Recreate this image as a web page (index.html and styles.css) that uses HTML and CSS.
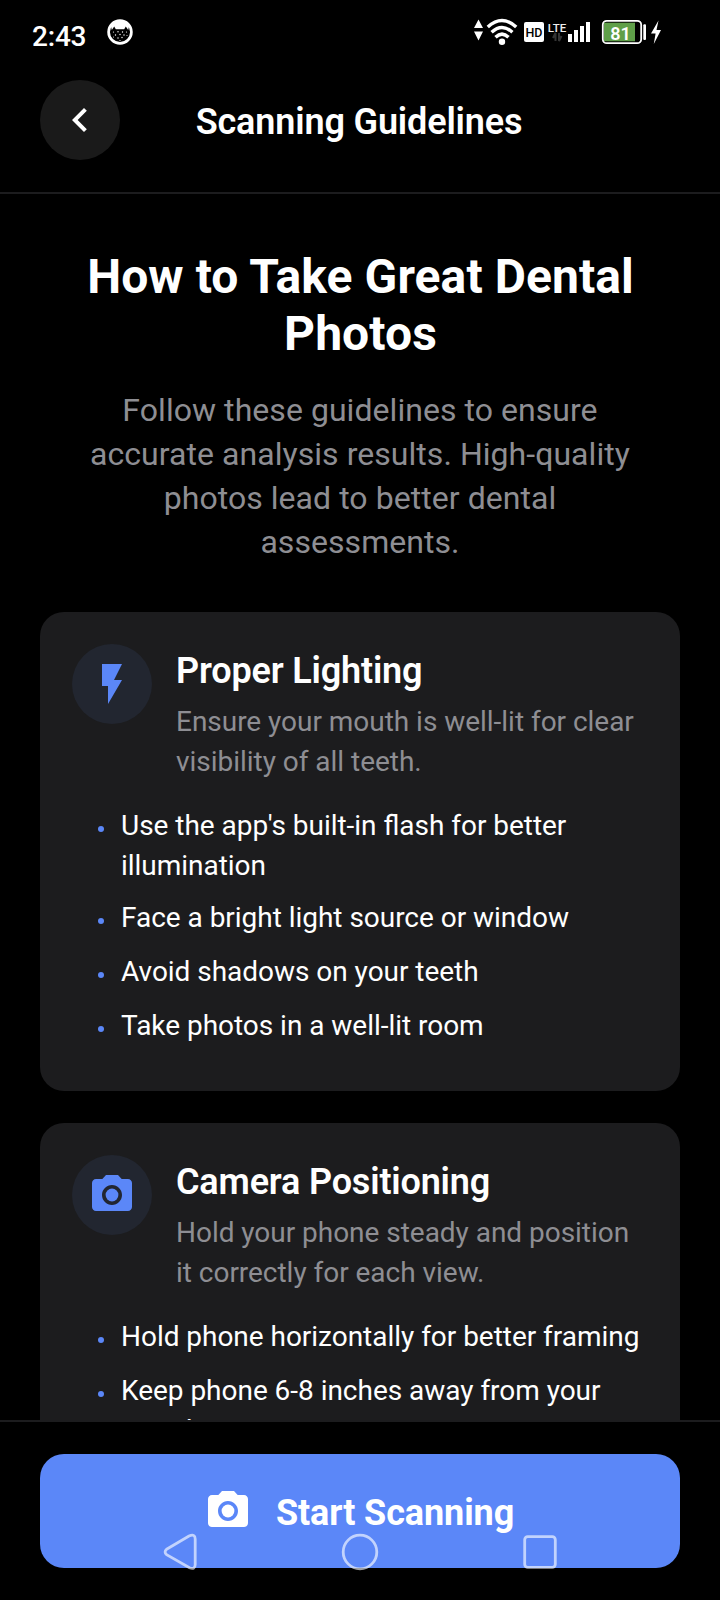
FILE: index.html
```html
<!DOCTYPE html>
<html lang="en">
<head>
<meta charset="utf-8">
<title>Scanning Guidelines</title>
<link rel="stylesheet" href="styles.css">
</head>
<body>
<div class="screen">
  <div class="status">
    <span class="clock">2:43</span>
    <svg class="cat" width="26" height="26" viewBox="0 0 26 26">
      <circle cx="13" cy="13" r="11.4" fill="#000" stroke="#fff" stroke-width="2.7"/>
      <path d="M4 7.5C6 2.5 10 1 13 1S20 2.5 22 7.5L21.2 11L18.8 7.5L17.2 10.2H8.8L7.2 7.5L4.8 11Z" fill="#fff"/>
      <g fill="#fff"><circle cx="6.5" cy="13" r=".6"/><circle cx="11" cy="12.8" r=".7"/><circle cx="15.5" cy="13" r=".7"/><circle cx="19.5" cy="13" r=".6"/><circle cx="8.5" cy="16" r=".7"/><circle cx="13" cy="15.5" r=".7"/><circle cx="17" cy="16" r=".7"/><circle cx="11" cy="19" r=".7"/><circle cx="15" cy="18.5" r=".7"/><circle cx="13" cy="21.5" r=".6"/><circle cx="20" cy="16.5" r=".5"/><circle cx="6.5" cy="18" r=".5"/></g>
    </svg>
    <svg class="indicators" width="190" height="28" viewBox="473 18 190 28">
      <g fill="#fff">
        <path d="M478.5 19.5L483 28H474ZM474 31.5H483L478.5 40.5Z"/>
        <circle cx="502" cy="41.8" r="3.2"/>
        <g fill="none" stroke="#fff" stroke-width="3.4">
          <path d="M487.8 27Q502 14 516.2 27"/><path d="M491.6 32.3Q502 22.6 512.4 32.3"/><path d="M495.5 37.2Q502 31 508.5 37.2"/>
        </g>
        <rect x="524" y="22" width="20" height="20" rx="2"/>
        <path d="M568 34h4v8h-4zM574 30h4v12h-4zM580 26h4v16h-4zM586 22h4v20h-4z"/>
        <rect x="643.3" y="24.3" width="2.7" height="15.7" rx="1"/>
        <path d="M658.5 20.5L651 33.5H655.6L653.8 44L661 30H656.5Z"/>
      </g>
      <path d="M555.5 41V33L553 38M559 33V41L561.5 36" fill="none" stroke="#343434" stroke-width="2"/>
      <rect x="602.8" y="20.8" width="38.4" height="22.4" rx="4" fill="#000" stroke="#fff" stroke-width="1.8"/>
      <path d="M604 22.7H635V41.3H604Z" fill="#5f9f49"/>
      <text x="534" y="36.5" class="hd">HD</text>
      <text x="557" y="32" class="lte">LTE</text>
      <text x="620.5" y="40" class="level">81</text>
    </svg>
  </div>
  <header class="header">
    <div class="back"><svg width="48" height="48" viewBox="0 0 24 24" fill="#fff"><path d="M15.41 7.41L14 6l-6 6 6 6 1.41-1.41L10.83 12z"/></svg></div>
    <h1 class="title">Scanning Guidelines</h1>
    <div class="spacer"></div>
  </header>
  <main class="content">
    <h2 class="hero">How to Take Great Dental Photos</h2>
    <p class="intro">Follow these guidelines to ensure accurate analysis results. High-quality photos lead to better dental assessments.</p>
    <section class="card">
      <div class="card-head">
        <div class="badge"><svg width="48" height="48" viewBox="0 0 24 24" fill="#5b87f8"><path d="M7 2v11h3v9l7-12h-4l4-8z"/></svg></div>
        <div class="card-copy">
          <h3 class="card-title">Proper Lighting</h3>
          <p class="card-desc">Ensure your mouth is well-lit for clear visibility of all teeth.</p>
        </div>
      </div>
      <ul class="tips">
        <li class="tip tip-wrapped">Use the app's built-in flash for better illumination</li>
        <li class="tip">Face a bright light source or window</li>
        <li class="tip">Avoid shadows on your teeth</li>
        <li class="tip">Take photos in a well-lit room</li>
      </ul>
    </section>
    <section class="card">
      <div class="card-head">
        <div class="badge"><svg width="48" height="48" viewBox="0 0 24 24" fill="#5b87f8"><circle cx="12" cy="12" r="3.2"/><path d="M9 2L7.17 4H4c-1.1 0-2 .9-2 2v12c0 1.1.9 2 2 2h16c1.1 0 2-.9 2-2V6c0-1.1-.9-2-2-2h-3.17L15 2H9zm3 15c-2.76 0-5-2.24-5-5s2.24-5 5-5 5 2.24 5 5-2.24 5-5 5z"/></svg></div>
        <div class="card-copy">
          <h3 class="card-title">Camera Positioning</h3>
          <p class="card-desc">Hold your phone steady and position it correctly for each view.</p>
        </div>
      </div>
      <ul class="tips">
        <li class="tip">Hold phone horizontally for better framing</li>
        <li class="tip tip-wrapped">Keep phone 6-8 inches away from your mouth</li>
      </ul>
    </section>
  </main>
  <footer class="footer">
    <div class="start">
      <svg width="48" height="48" viewBox="0 0 24 24" fill="#fff"><circle cx="12" cy="12" r="3.2"/><path d="M9 2L7.17 4H4c-1.1 0-2 .9-2 2v12c0 1.1.9 2 2 2h16c1.1 0 2-.9 2-2V6c0-1.1-.9-2-2-2h-3.17L15 2H9zm3 15c-2.76 0-5-2.24-5-5s2.24-5 5-5 5 2.24 5 5-2.24 5-5 5z"/></svg>
      <span class="start-label">Start Scanning</span>
    </div>
  </footer>
  <svg class="sysnav" width="720" height="48" viewBox="0 1528 720 48" fill="none" stroke="#fff" stroke-opacity=".63" stroke-width="2.8">
    <path d="M166.6 1549.2L189 1536Q195.2 1533.4 195.2 1539V1564.5Q195.2 1570 189.5 1567.8L166.6 1554.6Q163.6 1552 166.6 1549.2Z"/>
    <circle cx="360" cy="1552" r="16.8"/>
    <rect x="524.7" y="1536.7" width="30.6" height="30.6" rx="3"/>
  </svg>
</div>
</body>
</html>
```
FILE: styles.css
```css
* { box-sizing: border-box; margin: 0; padding: 0; }
body { background: #000; color: #fff; font-family: Roboto, sans-serif; }
svg { display: block; flex: none; }
.screen { position: relative; width: 720px; height: 1600px; display: flex; flex-direction: column; overflow: hidden; background: #000; }
.status { height: 80px; flex: none; display: flex; align-items: flex-start; padding: 18px 57px 0 32px; }
.clock { width: 75px; padding-top: 1px; font-size: 28px; line-height: 36px; font-weight: 500; letter-spacing: -.2px; }
.cat { margin-top: 1px; }
.indicators { margin-left: auto; }
.hd { font: 500 12.5px Roboto, sans-serif; fill: #000; text-anchor: middle; }
.lte { font: 500 11.5px Roboto, sans-serif; fill: #eee; text-anchor: middle; }
.level { font: 600 18px Roboto, sans-serif; fill: #fff; text-anchor: middle; }
.header { height: 114px; flex: none; display: flex; justify-content: space-between; padding: 0 40px; border-bottom: 2px solid #1c1c1e; }
.back { width: 80px; height: 80px; border-radius: 50%; background: #1a1a1a; display: flex; align-items: center; justify-content: center; }
.title { font-size: 36px; line-height: 42px; font-weight: 600; letter-spacing: -.15px; padding: 21px 2px 0 0; }
.spacer { width: 80px; }
.content { flex: 1; min-height: 0; overflow: hidden; padding: 54px 40px 0; }
.hero { font-size: 48px; line-height: 57px; font-weight: 700; letter-spacing: .08px; text-align: center; margin-bottom: 26px; padding-left: 1px; }
.intro { font-size: 32px; line-height: 44px; letter-spacing: .05px; color: #8e8e93; text-align: center; padding: 0 32px; margin-bottom: 48px; }
.card { background: #1c1c1e; border-radius: 24px; padding: 32px 32px 45px; margin-bottom: 32px; }
.card-head { display: flex; gap: 24px; margin-bottom: 24px; }
.badge { width: 80px; height: 80px; flex: none; border-radius: 50%; background: #222630; display: flex; align-items: center; justify-content: center; }
.card-copy { flex: 1; padding-top: 6px; }
.card-title { font-size: 36px; line-height: 42px; font-weight: 600; letter-spacing: -.17px; margin-bottom: 10px; }
.card-desc { font-size: 28px; line-height: 40px; letter-spacing: -.03px; color: #8e8e93; }
.tips { list-style: none; display: flex; flex-direction: column; padding-left: 26px; }
.tip { display: flex; gap: 17px; font-size: 28px; line-height: 40px; letter-spacing: -.03px; font-feature-settings: "liga" 1; margin-bottom: 14px; }
.tip::before { content: ""; width: 6px; height: 6px; flex: none; margin-top: 20px; border-radius: 50%; background: #5b87f8; }
.tip-wrapped { margin-bottom: 12px; }
.tip:last-child { margin-bottom: 0; }
.footer { height: 180px; flex: none; padding: 32px 40px; border-top: 2px solid #1c1c1e; background: #000; }
.start { height: 114px; border-radius: 24px; background: #5b87f8; display: flex; align-items: center; justify-content: center; gap: 24px; padding-right: 2px; }
.start-label { font-size: 36px; line-height: 42px; font-weight: 700; letter-spacing: -.1px; padding-top: 3px; }
.sysnav { position: absolute; left: 0; top: 1528px; }
```
